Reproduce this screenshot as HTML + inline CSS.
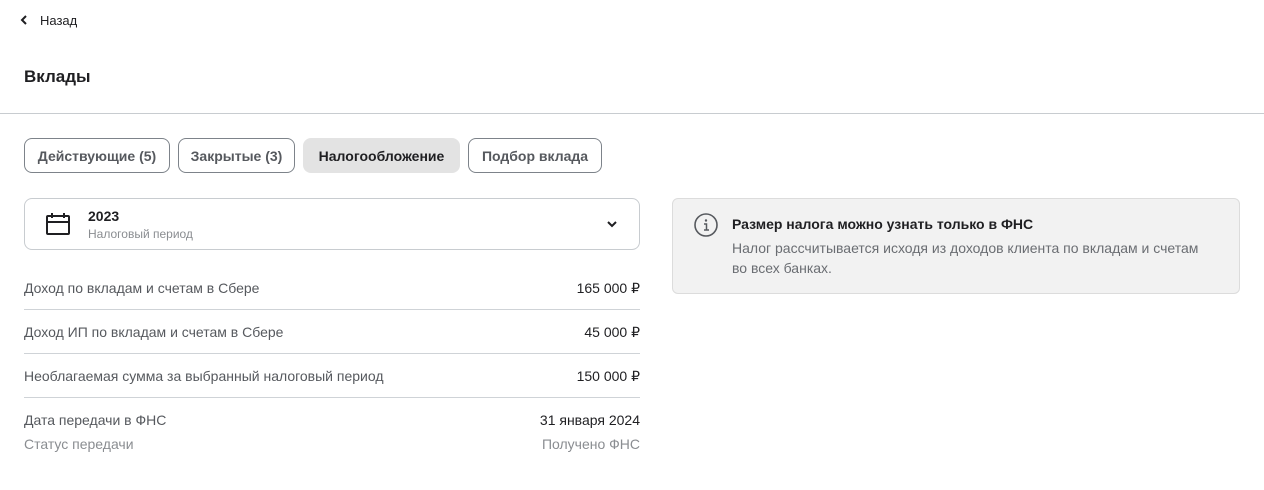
<!DOCTYPE html>
<html><head><meta charset="utf-8"><style>
body{margin:0;width:1264px;height:490px;background:#fff;font-family:"Liberation Sans",sans-serif;color:#1f1f22;position:relative;overflow:hidden}
.a{position:absolute;white-space:nowrap}
.tab{position:absolute;top:138px;height:35px;box-sizing:border-box;border:1px solid #7d838a;border-radius:8px;font-size:14px;font-weight:bold;color:#56595e;line-height:34px;text-align:center}
.row{position:absolute;left:24px;width:616px;font-size:14px;color:#56595e}
.row span{position:absolute;right:0;color:#1f1f22}
.hr{position:absolute;left:24px;width:616px;height:1px;background:#cfd3d7}
</style></head><body>
<svg class="a" style="left:18px;top:14px" width="12" height="12" viewBox="0 0 12 12"><path d="M8 2L4 6l4 4" fill="none" stroke="#1f1f22" stroke-width="2"/></svg>
<div class="a" style="left:40px;top:13px;font-size:13px">Назад</div>
<div class="a" style="left:24px;top:67px;font-size:17px;font-weight:bold">Вклады</div>
<div class="a" style="left:0;top:113px;width:1264px;height:1px;background:#c8ccd0"></div>
<div class="tab" style="left:24px;width:146px">Действующие (5)</div>
<div class="tab" style="left:178px;width:117px">Закрытые (3)</div>
<div class="tab" style="left:303px;width:157px;border:none;background:#e3e3e3;color:#1f1f22;line-height:36px">Налогообложение</div>
<div class="tab" style="left:468px;width:134px">Подбор вклада</div>
<div class="a" style="left:24px;top:198px;width:616px;height:52px;box-sizing:border-box;border:1px solid #c8ccd0;border-radius:8px"></div>
<svg class="a" style="left:45px;top:212px" width="26" height="24" viewBox="0 0 26 24"><rect x="2" y="4" width="22" height="18" rx="1" fill="none" stroke="#1f1f22" stroke-width="2"/><path d="M2 10h22M7 1v5M19 1v5" stroke="#1f1f22" stroke-width="2"/></svg>
<div class="a" style="left:88px;top:208px;font-size:14px;font-weight:bold">2023</div>
<div class="a" style="left:88px;top:227px;font-size:12px;color:#8a8d91">Налоговый период</div>
<svg class="a" style="left:606px;top:219px" width="12" height="10" viewBox="0 0 12 10"><path d="M2 3l4 4 4-4" fill="none" stroke="#1f1f22" stroke-width="2"/></svg>
<div class="row" style="top:280px">Доход по вкладам и счетам в Сбере<span>165 000 ₽</span></div>
<div class="hr" style="top:309px"></div>
<div class="row" style="top:324px">Доход ИП по вкладам и счетам в Сбере<span>45 000 ₽</span></div>
<div class="hr" style="top:353px"></div>
<div class="row" style="top:368px">Необлагаемая сумма за выбранный налоговый период<span>150 000 ₽</span></div>
<div class="hr" style="top:397px"></div>
<div class="row" style="top:412px">Дата передачи в ФНС<span>31 января 2024</span></div>
<div class="row" style="top:436px;color:#8a8d91">Статус передачи<span style="color:#8a8d91">Получено ФНС</span></div>
<div class="a" style="left:672px;top:198px;width:568px;height:96px;box-sizing:border-box;border:1px solid #dcdcdc;border-radius:6px;background:#f2f2f2"></div>
<svg class="a" style="left:693px;top:212px" width="26" height="26" viewBox="0 0 26 26"><circle cx="13" cy="13" r="11" fill="none" stroke="#56595e" stroke-width="1.6"/><circle cx="13" cy="8.5" r="1.2" fill="#56595e"/><path d="M11 12h2.5v6M11 18h5" fill="none" stroke="#56595e" stroke-width="1.5"/></svg>
<div class="a" style="left:732px;top:216px;font-size:14px;font-weight:bold">Размер налога можно узнать только в ФНС</div>
<div class="a" style="left:732px;top:238px;font-size:14px;color:#6a6d72;line-height:20px">Налог рассчитывается исходя из доходов клиента по вкладам и счетам<br>во всех банках.</div>
</body></html>
